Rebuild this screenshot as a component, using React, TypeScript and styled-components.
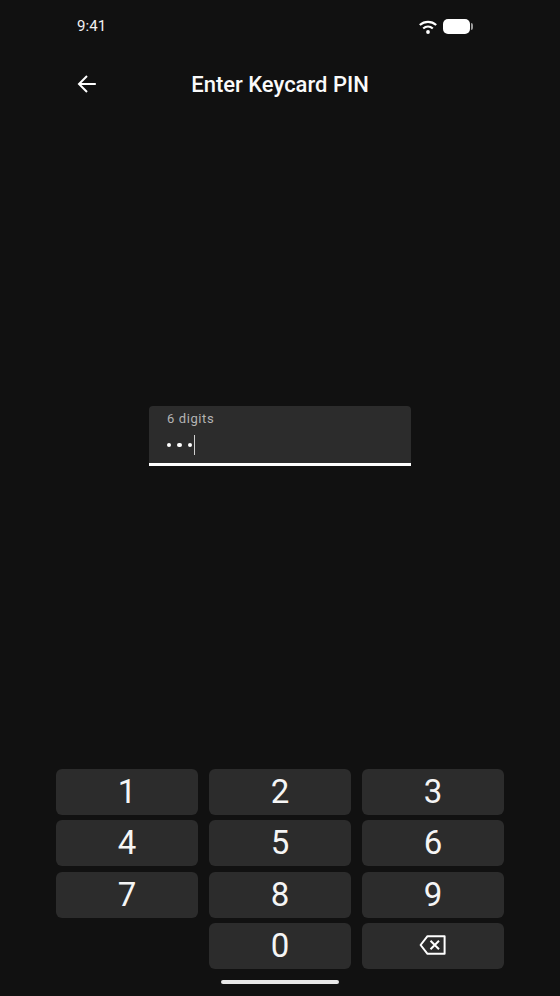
import { FC } from "react"
import styled, { createGlobalStyle } from "styled-components"

const KEYS = ["1", "2", "3", "4", "5", "6", "7", "8", "9", "", "0", "del"]

const App: FC = () => {
  return (
    <>
      <GlobalStyle />
      <Screen>
        <StatusBar>
          <Time>9:41</Time>
          <StatusIcons>
            <svg width="20" height="14" viewBox="0 0 20 14" fill="none" stroke="#fff" strokeWidth="2.2">
              <path d="M1.8 5C6.6 0.8 13.4 0.8 18.2 5" />
              <path d="M5.2 8.5C8 6 12 6 14.8 8.5" />
              <circle cx="10" cy="12" r="1.9" fill="#fff" stroke="none" />
            </svg>
            <Battery />
            <BatteryTip />
          </StatusIcons>
        </StatusBar>
        <Header>
          <BackButton>
            <svg width="20" height="20" viewBox="0 0 20 20" fill="none" stroke="#fff" strokeWidth="2">
              <path d="M18.8 10H3" />
              <path d="M10 2L2 10L10 18" />
            </svg>
          </BackButton>
          <Title>Enter Keycard PIN</Title>
        </Header>
        <Field>
          <FieldLabel>6 digits</FieldLabel>
          <FieldValue>
            <Dot />
            <Dot />
            <Dot />
            <Caret />
          </FieldValue>
        </Field>
        <Keypad>
          {KEYS.map((key, idx) =>
            key === "" ? (
              <span key={idx} />
            ) : (
              <Key key={idx}>
                {key === "del" ? (
                  <svg width="28" height="20" viewBox="0 0 28 20" fill="none" stroke="#fff" strokeWidth="2">
                    <path d="M8.5 1.2H25.6V18.8H8.5L1.6 10Z" strokeLinejoin="round" />
                    <path d="M11.5 5.8L20 14.2M20 5.8L11.5 14.2" />
                  </svg>
                ) : (
                  key
                )}
              </Key>
            ),
          )}
        </Keypad>
        <HomeIndicator />
      </Screen>
    </>
  )
}
export default App

const GlobalStyle = createGlobalStyle`
  html, body {
    margin: 0;
    padding: 0;
    background: #111111;
  }
  * {
    box-sizing: border-box;
  }
`
const Screen = styled.div`
  width: 560px;
  height: 996px;
  overflow: hidden;
  display: flex;
  flex-direction: column;
  background: #111111;
  color: #fff;
  font-family: Roboto, "Liberation Sans", sans-serif;
`
const StatusBar = styled.div`
  height: 52px;
  flex: none;
  display: flex;
  align-items: center;
  justify-content: space-between;
  padding: 0 87px 0 77px;
`
const Time = styled.span`
  font-size: 15px;
  line-height: 20px;
  letter-spacing: 0.1px;
  color: #f2f2f2;
`
const StatusIcons = styled.div`
  display: flex;
  align-items: center;
  margin-top: 1px;
`
const Battery = styled.div`
  width: 27px;
  height: 15px;
  margin-left: 5px;
  border-radius: 5px;
  background: #fff;
`
const BatteryTip = styled.div`
  width: 2px;
  height: 7px;
  margin-left: 1px;
  border-radius: 0 2px 2px 0;
  background: #9a9a9a;
`
const Header = styled.div`
  height: 64px;
  flex: none;
  position: relative;
  display: flex;
  align-items: center;
  justify-content: center;
  padding-top: 1px;
`
const BackButton = styled.div`
  position: absolute;
  left: 77px;
  top: 22px;
  width: 20px;
  height: 20px;
  display: flex;
`
const Title = styled.h1`
  margin: 0;
  font-size: 22px;
  font-weight: 500;
  line-height: 28px;
  color: #fafafa;
`
const Field = styled.div`
  width: 261.4px;
  height: 60px;
  flex: none;
  margin: 289.7px 0 0 149.3px;
  padding: 5px 17.7px 0;
  border-radius: 4px 4px 0 0;
  border-bottom: 3.5px solid #fff;
  background: #2c2c2c;
`
const FieldLabel = styled.div`
  font-size: 13px;
  line-height: 16px;
  letter-spacing: 0.6px;
  color: #b4b4b4;
`
const FieldValue = styled.div`
  height: 20px;
  margin-top: 8.5px;
  display: flex;
  align-items: center;
  gap: 5.8px;
`
const Dot = styled.span`
  width: 4.5px;
  height: 4.5px;
  border-radius: 50%;
  background: #fff;
`
const Caret = styled.span`
  width: 1px;
  height: 20px;
  margin-left: -3.9px;
  background: #d0d0d0;
`
const Keypad = styled.div`
  flex: none;
  margin-top: 303.6px;
  padding: 0 56px;
  display: grid;
  grid-template-columns: repeat(3, 141.8px);
  grid-auto-rows: 46px;
  column-gap: 11.3px;
  row-gap: 5.2px;
`
const Key = styled.div`
  display: flex;
  align-items: center;
  justify-content: center;
  padding-bottom: 1px;
  border-radius: 6px;
  background: #2c2c2c;
  font-size: 33px;
  font-weight: 400;
  color: #f5f5f5;
`
const HomeIndicator = styled.div`
  width: 118px;
  height: 4px;
  flex: none;
  margin: 11.5px auto 0;
  border-radius: 2px;
  background: #e8e8e8;
`
